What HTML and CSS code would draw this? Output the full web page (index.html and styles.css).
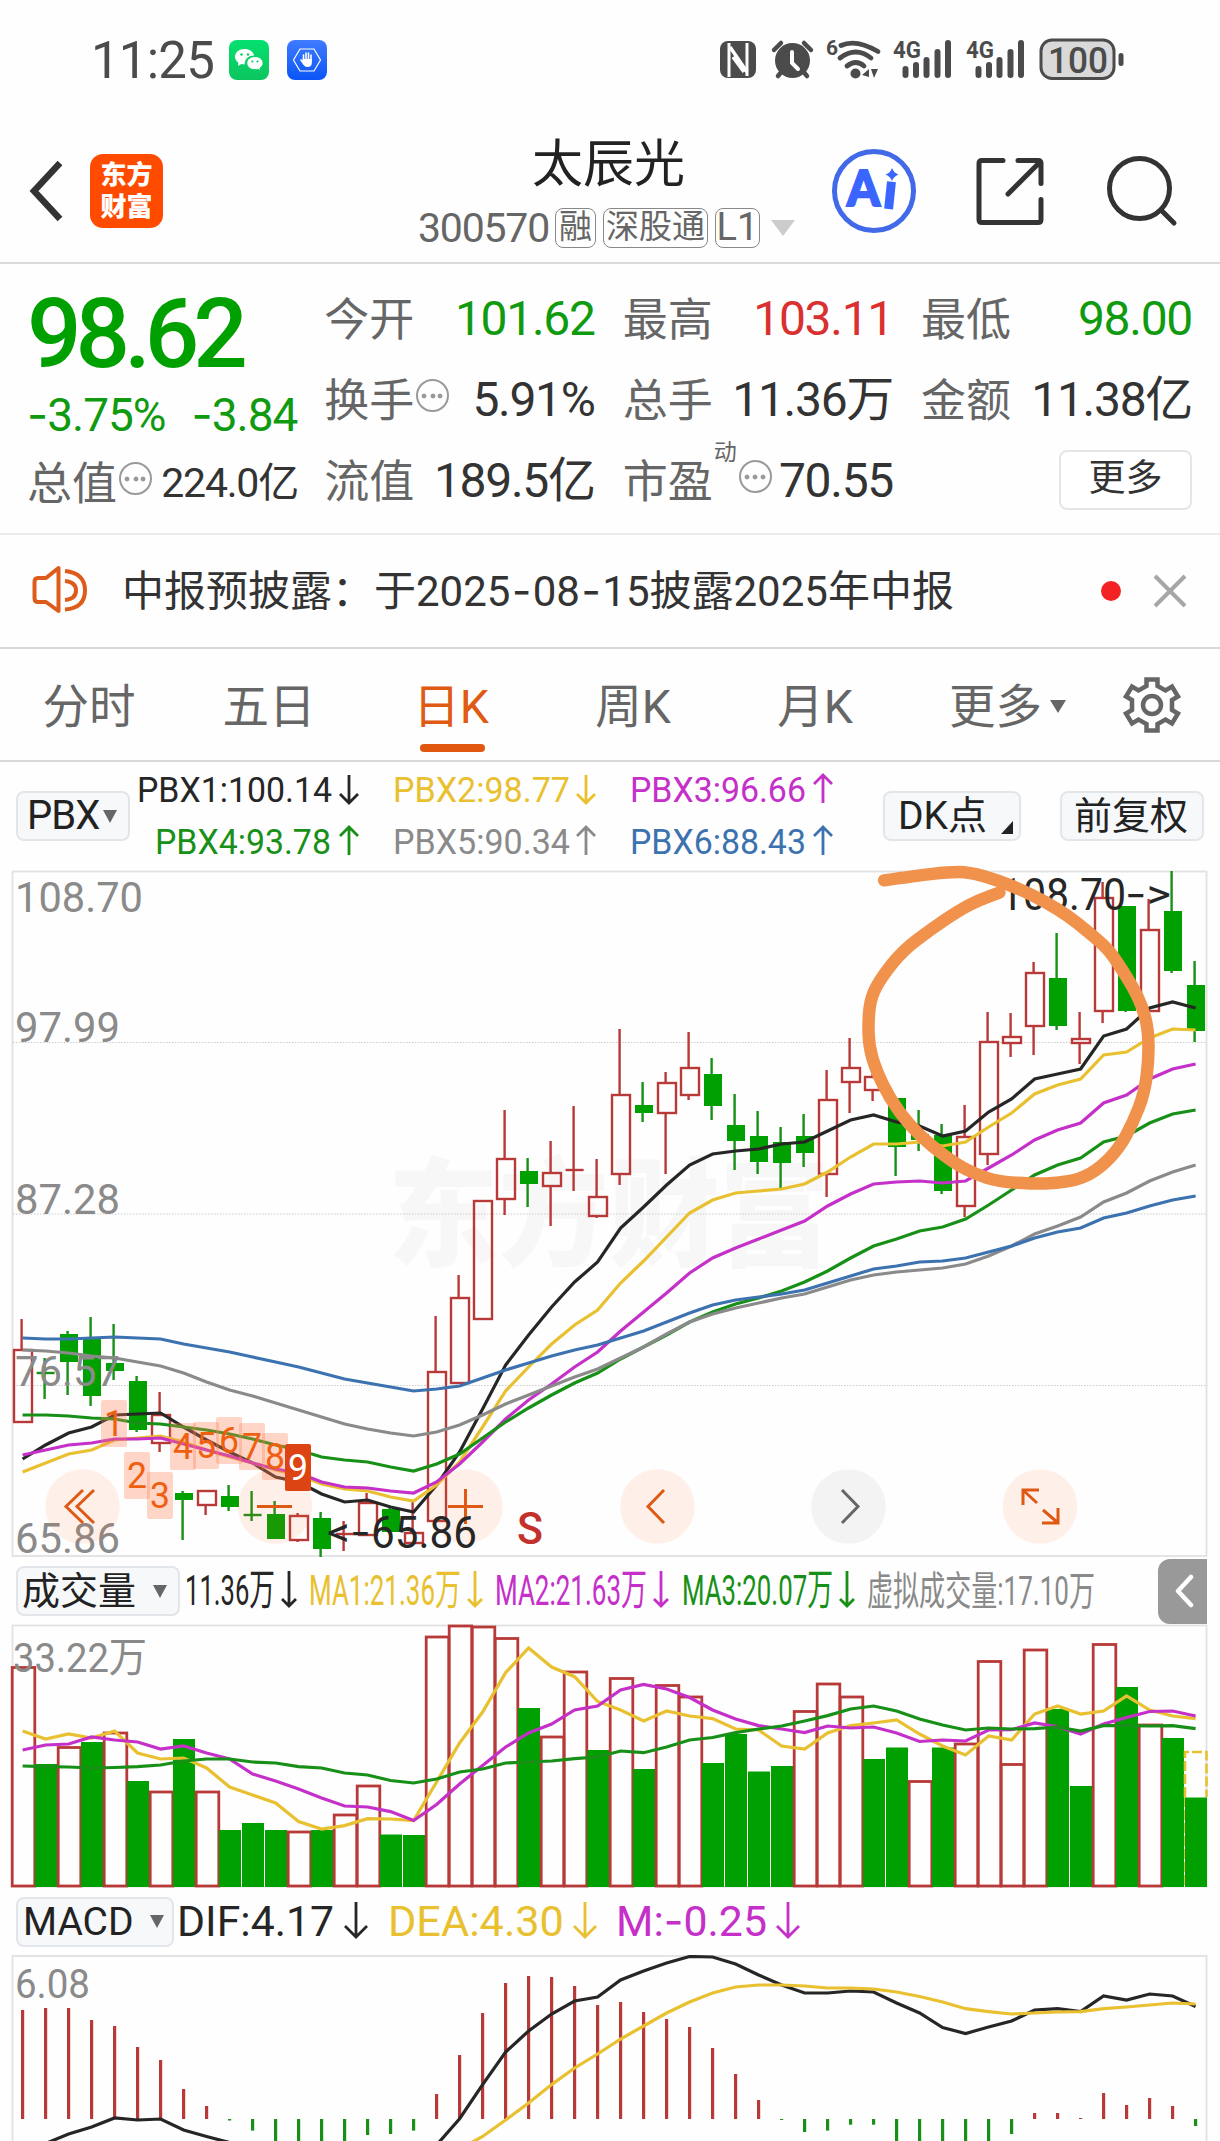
FILE: index.html
```html
<!DOCTYPE html>
<html lang="zh-CN">
<head>
<meta charset="utf-8">
<title>太辰光 300570</title>
<link rel="stylesheet" href="styles.css">
</head>
<body>
<div class="status">
  <span class="clock">11:25</span>
  <svg class="app-ico" width="40" height="40" viewBox="0 0 40 40"><defs><linearGradient id="wg" x2="0" y2="1"><stop stop-color="#05e070"/><stop offset="1" stop-color="#0cc55e"/></linearGradient></defs><rect width="40" height="40" rx="8" fill="url(#wg)"/><path d="M15.500 9C10.200 9 6 12.400 6 16.700c0 2.500 1.300 4.500 3.400 5.900L9 26l3.400-1.900c1 .3 2 .4 3.200.4C15.500 18.500 20 15.500 25 15.500 24.300 11.500 20.300 9 15.500 9Z" fill="#fff"/><path d="M26 16.500c-4.700 0-8.200 3-8.200 6.600s3.500 6.700 8.200 6.700c1 0 2-.2 2.900-.5l2.500 1.500-.5-2.600c2-1.200 3.200-3 3.200-5.100 0-3.700-3.600-6.600-8.100-6.600Z" fill="#fff" stroke="#08d067"/><g fill="#08d067"><circle cx="12.500" cy="14.500" r="1.300"/><circle cx="19" cy="14.500" r="1.300"/><circle cx="23.300" cy="21.500" r="1.100"/><circle cx="28.500" cy="21.500" r="1.100"/></g></svg>
  <svg class="app-ico hand-ico" width="40" height="40" viewBox="0 0 40 40"><defs><linearGradient id="bg" x2="0" y2="1"><stop stop-color="#3f7bff"/><stop offset="1" stop-color="#0b55f5"/></linearGradient></defs><rect width="40" height="40" rx="8" fill="url(#bg)"/><path d="M13 9h14l6.500 11L27 31H13L6.500 20Z" fill="none" stroke="#fff" stroke-width="1.200"/><path d="M16.500 21v-6M19 20v-7M21.500 20v-7M24 21v-6M14 20l3 4" stroke="#fff" stroke-width="1.600" stroke-linecap="round"/><path d="M15.700 19h9.100v4q0 4-4.500 4-3 0-5-4.500Z" fill="#fff"/></svg>
  <svg class="sys" width="412" height="52" viewBox="714 34 412 52">
    <g fill="#4b4b4b" stroke="none">
      <rect x="720" y="41" width="36" height="37" rx="8"/>
      <path d="M729 43v34M747 43v33" stroke="#fefefe" stroke-width="3"/><path d="M730 47l17 25M733 57l11 15" stroke="#fefefe" stroke-width="3.500"/>
      <circle cx="792.500" cy="60.500" r="17.500"/>
      <path d="M774 50l7-7M811 50l-7-7M778 76l5-6M807 76l-5-6" stroke="#4b4b4b" stroke-width="4.500" stroke-linecap="round"/>
      <path d="M792 52v11l6 6" stroke="#fefefe" stroke-width="4" fill="none" stroke-linecap="round"/>
      <text x="826" y="55" font-size="21" font-weight="700">6</text>
      <g fill="none" stroke="#4b4b4b" stroke-width="4.800" stroke-linecap="round"><path d="M841 45.500q15-7 37 6M840 58q16-12 31 0M847 66q9-7 17 0"/></g>
      <circle cx="855.500" cy="73.500" r="5"/><path d="M862 75l7-6v8M871 69l7 0-4 9" />
      <text x="893" y="58" font-size="24" font-weight="700" textLength="28" lengthAdjust="spacingAndGlyphs">4G</text>
      <text x="966" y="58" font-size="24" font-weight="700" textLength="28" lengthAdjust="spacingAndGlyphs">4G</text>
      <path d="M905.500 69v6M916 65v10M926.500 60v15M937.500 52v23M948 43v32" stroke="#4b4b4b" stroke-width="6" stroke-linecap="round"/>
      <path d="M978.500 69v6M989 65v10M999.500 60v15M1010.500 52v23M1021 43v32" stroke="#4b4b4b" stroke-width="6" stroke-linecap="round"/>
      <rect x="1041" y="40" width="73" height="38.500" rx="11" fill="#d9d9d9" stroke="#4b4b4b" stroke-width="3"/>
      <path d="M1121 55.500v8" stroke="#4b4b4b" stroke-width="5" stroke-linecap="round"/>
      <text x="1048" y="73" font-size="37" font-weight="500" textLength="60" lengthAdjust="spacingAndGlyphs">100</text>
    </g>
  </svg>
</div>

<header class="head">
  <svg class="back" width="40" height="66" viewBox="0 0 40 66"><path d="M33 5L7 33l26 28" fill="none" stroke="#333" stroke-width="6.500"/></svg>
  <div class="logo"><span>东方</span><span>财富</span></div>
  <div class="title">
    <h1>太辰光</h1>
    <p><span class="code">300570</span><i class="tag">融</i><i class="tag wide">深股通</i><i class="tag l1">L1</i><b class="drop"></b></p>
  </div>
  <svg class="ai" width="86" height="86" viewBox="832 148 86 86"><circle cx="875" cy="191" r="39.500" fill="#fff" stroke="#4169e8" stroke-width="5"/><text x="848" y="206" class="ai-t" textLength="33" lengthAdjust="spacingAndGlyphs">A</text><text x="884" y="208" class="ai-t" transform="rotate(6 890 200)" textLength="13" lengthAdjust="spacingAndGlyphs">ı</text><path d="M893 168q2 5 6.500 6.500-5 2-6.500 6.500-2-5-6.500-6.500 5-1.500 6.500-6.500Z" fill="#3a66ff"/></svg>
  <svg class="share" width="74" height="74" viewBox="974 154 74 74"><path d="M1004 160.500h-21q-3 0-3 3v56q0 3 3 3h56q3 0 3-3v-20M1019 160.500h20q3 0 3 3v20M1041 162l-32 32" fill="none" stroke="#333" stroke-width="5" stroke-linecap="round"/></svg>
  <svg class="search" width="76" height="76" viewBox="1104 152 76 76"><circle cx="1140.500" cy="187.500" r="30" fill="none" stroke="#333" stroke-width="5"/><path d="M1162 209l13 13" stroke="#333" stroke-width="5" stroke-linecap="round"/></svg>
</header>

<section class="quote">
  <div class="q-left">
    <div class="price">98.62</div>
    <div class="chg"><span><i class="dash">-</i>3.75%</span><span><i class="dash">-</i>3.84</span></div>
    <div class="cell small"><label>总值</label><b class="dots"></b><span>224.0亿</span></div>
  </div>
  <div class="col"><div class="cell"><label>今开</label><span class="dn">101.62</span></div><div class="cell"><label>换手</label><b class="dots"></b><span>5.91%</span></div><div class="cell"><label>流值</label><span>189.5亿</span></div></div>
  <div class="col"><div class="cell"><label>最高</label><span class="up">103.11</span></div><div class="cell"><label>总手</label><span>11.36万</span></div><div class="cell"><label class="pe">市盈<sup>动</sup></label><b class="dots"></b><span>70.55</span></div></div>
  <div class="col"><div class="cell"><label>最低</label><span class="dn">98.00</span></div><div class="cell"><label>金额</label><span>11.38亿</span></div><div class="cell"><button class="more">更多</button></div></div>
</section>

<section class="notice">
  <svg width="60" height="54" viewBox="30 564 60 54" fill="none" stroke="#dd5c1c" stroke-width="4" stroke-linejoin="round"><path d="M58.500 568v43L46 602h-8q-3.500 0-3.500-4V582q0-4 3.500-4h8Z"/><path d="M65 571q20 2 20 19.500T65 609.500M65 581q11 1 11 9.500T65 600"/></svg>
  <p>中报预披露：于2025<i class="dash">-</i>08<i class="dash">-</i>15披露2025年中报</p>
  <b class="red"></b>
  <svg width="36" height="36" viewBox="0 0 36 36"><path d="M3 3l30 30M33 3L3 33" stroke="#a6a6a6" stroke-width="4"/></svg>
</section>

<nav class="tabs">
  <a>分时</a><a>五日</a><a class="on">日K</a><a>周K</a><a>月K</a><a class="mr">更多<b></b></a>
  <svg width="60" height="60" viewBox="-30 -30 60 60" fill="none" stroke="#666" stroke-width="4.500"><path d="M-5.500-25.500h11v6.500l8 4.500 6.500-4 6 10-6 3.500v10l6 3.500-6 10-6.500-4-8 4.500v6.500h-11v-6.500l-8-4.500-6.500 4-6-10 6-3.500V-5l-6-3.500 6-10 6.500 4 8-4.500Z"/><circle r="9"/></svg>
</nav>

<div class="legend pbx">
  <button class="sel">PBX<b></b></button>
  <svg width="720" height="108" viewBox="132 762 720 108" class="lg" id="pbxLegend"></svg>
  <button class="sel dk">DK点<b></b></button>
  <button class="sel fq">前复权</button>
</div>

<svg class="chart" id="kline" width="1220" height="688" viewBox="0 870 1220 688"></svg>

<div class="legend vol">
  <button class="sel">成交量<b></b></button>
  <svg width="960" height="66" viewBox="181 1558 960 66" class="lg" id="volLegend"></svg>
  <div class="fold"><svg width="20" height="34" viewBox="0 0 20 34"><path d="M17 3L4 17l13 14" fill="none" stroke="#fff" stroke-width="4.500" stroke-linecap="round" stroke-linejoin="round"/></svg></div>
</div>
<svg class="chart" id="volume" width="1220" height="264" viewBox="0 1624 1220 264"></svg>
<div class="legend macd">
  <button class="sel">MACD<b></b></button>
  <svg width="660" height="67" viewBox="175 1888 660 67" class="lg" id="macdLegend"></svg>
</div>
<svg class="chart" id="macd" width="1220" height="186" viewBox="0 1955 1220 186"></svg>
<script src="chart.js"></script>
</body>
</html>
```
FILE: styles.css
```css
* { box-sizing: border-box; }
body { margin: 0; width: 1220px; height: 2141px; overflow: hidden; background: #fefefe; color: #333; font-family: Roboto, "Noto Sans CJK SC", sans-serif; }
i { font-style: normal; }
svg { display: block; flex: none; }
button { font: inherit; color: inherit; margin: 0; padding: 0; }
h1, p { margin: 0; font-weight: 400; }
.dash { font-family: Inter, sans-serif; }

.status { height: 120px; display: flex; align-items: center; padding-left: 91px; color: #4b4b4b; }
.clock { font-size: 51px; width: 138px; letter-spacing: -.8px; }
.hand-ico { margin-left: 18px; }
.sys { margin-left: auto; margin-right: 94px; }

.head { height: 144px; border-bottom: 2px solid #dadada; display: flex; align-items: center; padding: 0 40px 0 27px; }
.logo { margin-left: 23px; width: 73px; height: 74px; border-radius: 13px; background: #ff4b00; color: #fff; font-weight: 900; font-size: 26px; line-height: 32px; display: flex; flex-direction: column; align-items: center; justify-content: center; }
.title { width: 400px; margin-left: 246px; height: 142px; padding-top: 10px; }
.title h1 { font-size: 51px; line-height: 70px; color: #222; padding-left: 123px; }
.title p { display: flex; align-items: center; height: 44px; margin-top: 6px; padding-left: 9px; color: #666; }
.code { font-size: 41px; letter-spacing: -1.200px; width: 137px; }
.tag { border: 1.500px solid #888; border-radius: 8px; height: 40px; width: 41px; margin-right: 7px; font-size: 33px; line-height: 36px; text-align: center; white-space: nowrap; }
.tag.wide { width: 105px; }
.tag.l1 { width: 45px; font-size: 38px; }
.drop { margin-left: 4px; border: 12px solid transparent; border-top: 16px solid #ccc; border-bottom: 0; }
.ai { margin-left: 22px; }
.ai-t { font-family: Lato, sans-serif; font-weight: 900; font-size: 49px; fill: #3a66ff; stroke: #3a66ff; stroke-width: 2px; }
.share { margin-left: 56px; }
.search { margin-left: 56px; }

.quote { height: 271px; border-bottom: 2px solid #ececec; display: flex; padding: 13px 0 0 27px; }
.q-left { width: 298px; }
.price { height: 110px; line-height: 112px; font-size: 96px; font-weight: 500; letter-spacing: -6px; color: #00a000; padding-top: 1px; }
.chg { height: 50px; line-height: 54px; margin-top: 0; font-size: 46px; letter-spacing: -1px; color: #109a10; display: flex; gap: 26px; }
.q-left .cell { width: 271px; margin-top: 4px; }
.col { width: 271px; margin-right: 28px; }
.cell { height: 81px; display: flex; align-items: center; white-space: nowrap; }
.cell label { font-size: 45px; line-height: 60px; color: #666; position: relative; top: 3px; }
.cell span { margin-left: auto; font-size: 48px; line-height: 60px; padding-top: 2px; letter-spacing: -1.300px; }
.cell.small span { font-size: 41px; letter-spacing: -1.200px; }
.cell .dn { color: #109a10; }
.cell .up { color: #d93030; }
.cell sup { position: absolute; left: 91px; top: -15px; font-size: 23px; line-height: 30px; }
.dots { width: 33px; height: 33px; border-radius: 50%; border: 2.500px solid #999; margin: -6px 0 0 2px; background: radial-gradient(circle, #999 2px, transparent 2.800px) center / 8px 8px no-repeat, radial-gradient(circle, #999 2px, transparent 2.800px) 2px center / 8px 8px no-repeat, radial-gradient(circle, #999 2px, transparent 2.800px) 18px center / 8px 8px no-repeat; }
.pe + .dots { margin-left: 26px; }
.more { margin-left: 138px; width: 134px; height: 60px; border: 2px solid #e6e6e6; border-radius: 8px; background: #fff; font-size: 37px; line-height: 50px; padding-bottom: 2px; }

.notice { height: 114px; border-bottom: 2px solid #d8d8d8; display: flex; align-items: center; padding-left: 30px; }
.notice p { margin-left: 32px; width: 979px; font-size: 42px; line-height: 60px; white-space: pre; }
.notice .dash { margin: 0 1.500px; }
.red { width: 20px; height: 20px; border-radius: 50%; background: #f32323; margin-right: 31px; }

.tabs { height: 113px; border-bottom: 2px solid #d8d8d8; display: flex; align-items: center; color: #666; font-size: 46.500px; }
.tabs a { width: 182px; text-align: center; height: 111px; line-height: 116px; position: relative; white-space: nowrap; }
.tabs a:first-child { width: 178px; }
.tabs .on { color: #df5a12; }
.tabs .on::after { content: ""; position: absolute; left: 60px; bottom: 8px; width: 65px; height: 8px; border-radius: 4px; background: #e2570f; }
.tabs .mr { width: 216px; padding-left: 43px; text-align: left; }
.mr b { display: inline-block; margin-left: 8px; vertical-align: 10px; border: 8px solid transparent; border-top: 13px solid #666; border-bottom: 0; }

.legend { display: flex; align-items: center; color: #222; position: relative; }
.legend svg text { font-family: Roboto, "Noto Sans CJK SC", sans-serif; }
.sel { border: 2px solid #e2e5e9; border-radius: 8px; background: #f6f8fa; white-space: nowrap; line-height: 44px; display: flex; align-items: center; flex: none; }
.sel b { border: 7.500px solid transparent; border-top: 13px solid #666; border-bottom: 0; }
.pbx { height: 108px; }
.pbx .sel { margin-left: 16px; width: 114px; height: 50px; font-size: 40px; padding-left: 9px; letter-spacing: -1px; }
.pbx .sel b { margin-left: 4px; }
.pbx .lg { margin-left: 1px; }
.pbx .dk { margin-left: 32px; width: 138px; font-size: 39px; padding-left: 13px; position: relative; letter-spacing: 0; }
.pbx .dk b { position: absolute; right: 6px; bottom: 5px; border: 0; border-left: 12px solid transparent; border-bottom: 13px solid #222; }
.pbx .fq { margin-left: 39px; width: 144px; font-size: 38px; padding-left: 12px; letter-spacing: 0; }
.vol { height: 66px; }
.vol .sel { margin-left: 16px; width: 164px; height: 50px; font-size: 38px; padding-left: 4px; }
.vol .sel b { margin-left: 17px; }
.vol .lg { margin-left: 1px; }
.fold { width: 49px; height: 65px; margin-left: 17px; background: #999; border-radius: 12px 0 0 12px; display: flex; align-items: center; padding-left: 16px; }
.macd { height: 67px; }
.macd .sel { margin-left: 16px; width: 158px; height: 50px; font-size: 39px; padding-left: 5px; }
.macd .sel b { margin-left: 16px; }
.macd .lg { margin-left: 1px; }
.chart { overflow: visible; }
#volume, #macd { overflow: hidden; }
.chart text { font-family: Roboto, "Noto Sans CJK SC", sans-serif; }
svg .dash { font-family: Inter, sans-serif; }
```
FILE: chart.js
```js
const RED = '#b83a38', GREEN = '#00a000', INK = '#262626', YEL = '#e8c030', MAG = '#c430c8', DG = '#189018', GR = '#8a8a8a', BLUE = '#3c72b0';
const cx = i => 22.6 + 23 * i;
const el = id => document.getElementById(id);
const T = (s, x, y, w, size, fill, extra = '') => `<text data-x="${x}" data-y="${y}" data-w="${w}" font-size="${size}" fill="${fill}" ${extra}>${String(s).replace('-', '<tspan class="dash">-</tspan>')}</text>`;
const line = (ys, c, start = 0) => `<polyline fill="none" stroke="${c}" stroke-width="3.200" points="${ys.map((y, k) => `${cx(start + k)},${y}`).join(' ')}"/>`;
const arrow = (x, y1, y2, c, up, h = 9) => { const t = up ? y1 : y2, d = up ? h : -h; return `<path d="M${x} ${y1}V${y2}M${x - h} ${t + d}L${x} ${t}L${x + h} ${t + d}" fill="none" stroke="${c}" stroke-width="2.800"/>`; };

el('pbxLegend').innerHTML = [
  ['PBX1:100.14', 138, 195, 802, INK, 0, 350], ['PBX2:98.77', 394, 177, 802, YEL, 0, 587], ['PBX3:96.66', 631, 176, 802, MAG, 1, 824],
  ['PBX4:93.78', 156, 176, 854, DG, 1, 350], ['PBX5:90.34', 394, 177, 854, GR, 1, 587], ['PBX6:88.43', 631, 176, 854, BLUE, 1, 824]
].map(([s, x, w, y, c, up, ax]) => T(s, x, y, w, 35, c) + arrow(ax, y - 27, y + 1, c, up)).join('');
el('volLegend').innerHTML = [
  ['11.36万', 185, 90, INK, 289], ['MA1:21.36万', 309, 152, YEL, 475], ['MA2:21.63万', 495, 152, MAG, 661], ['MA3:20.07万', 682, 151, DG, 847]
].map(([s, x, w, c, ax]) => T(s, x, 1605, w, 43, c) + arrow(ax, 1571, 1606, c, 0, 7)).join('') + T('虚拟成交量:17.10万', 867, 1605, 228, 40, GR);
el('macdLegend').innerHTML = [
  ['DIF:4.17', 177, 157, INK, 356], ['DEA:4.30', 388, 176, YEL, 585], ['M:-0.25', 616, 151, MAG, 788]
].map(([s, x, w, c, ax]) => T(s, x, 1936, w, 43, c) + arrow(ax, 1902, 1937, c, 0, 11)).join('');

// colour, high, body top, body bottom, low
const candles = `r1319,1350,1422,1422 g1358,1373,1373,1399 g1331,1334,1362,1395 g1317,1337,1396,1406 g1324,1363,1371,1380 g1376,1381,1430,1432 r1392,1415,1443,1452 g1491,1493,1500,1540 r1491,1491,1505,1515 g1485,1496,1507,1511 g1491,1515,1515,1521 g1501,1514,1539,1539 r1513,1516,1540,1542 g1512,1518,1549,1557 r1521,1534,1534,1551 r1493,1503,1535,1535 g1507,1509,1532,1532 r1500,1533,1543,1543 r1316,1372,1521,1521 r1275,1298,1383,1383 r1200,1201,1319,1319 r1110,1159,1199,1215 g1158,1171,1184,1207 r1141,1173,1186,1226 r1106,1170,1170,1191 r1159,1197,1216,1218 r1029,1095,1174,1185 g1082,1105,1113,1122 r1072,1083,1113,1174 r1032,1068,1095,1100 g1058,1074,1106,1120 g1094,1125,1141,1170 g1111,1136,1162,1174 g1127,1142,1163,1188 g1114,1136,1153,1167 r1070,1100,1174,1197 r1038,1068,1082,1113 r1073,1077,1090,1101 g1098,1098,1147,1176 g1110,1134,1140,1151 g1124,1135,1191,1194 r1105,1137,1206,1217 r1012,1042,1154,1165 r1013,1037,1043,1057 r962,973,1026,1055 g933,978,1026,1030 r1012,1039,1043,1064 r882,898,1011,1023 g906,906,1011,1012 r899,930,1011,1011 g871,911,971,973 g961,985,1031,1042`.split(' ');
const candle = (s, i) => {
  const [h, t, b, l] = s.slice(1).split(',').map(Number), c = s[0] === 'r' ? RED : DG, x = cx(i);
  let o = `<path d="M${x - 1} ${h}V${t}M${x - 1} ${b}V${l}" stroke="${c}" stroke-width="2.400"/>`;
  if (t === b) return o + `<path d="M${x - 9} ${t}H${x + 9}" stroke="${c}" stroke-width="2.400"/>`;
  return o + (s[0] === 'r' ? `<rect x="${x - 8.6}" y="${t}" width="18" height="${b - t}" fill="none" stroke="${RED}" stroke-width="2.400"/>` : `<rect x="${x - 8.6}" y="${t}" width="18" height="${b - t}" fill="${GREEN}"/>`);
};
const ma = [
  [INK, [1459,1445,1433,1427,1415,1414,1413,1427,1440,1452,1463,1477,1482,1494,1502,1500,1507,1512,1485,1452,1409,1365,1335,1307,1282,1262,1228,1207,1185,1165,1154,1151,1149,1144,1142,1131,1120,1115,1122,1126,1136,1131,1112,1099,1079,1074,1069,1036,1029,1008,1002,1008]],
  [YEL, [1472,1463,1454,1450,1440,1438,1436,1442,1450,1457,1463,1470,1475,1484,1489,1491,1497,1501,1485,1462,1427,1391,1367,1344,1325,1310,1283,1261,1237,1213,1200,1193,1191,1189,1184,1172,1157,1144,1144,1142,1146,1142,1127,1113,1094,1085,1079,1055,1052,1038,1029,1030]],
  [MAG, [1455,1450,1445,1443,1439,1439,1438,1444,1450,1456,1463,1469,1473,1482,1487,1488,1491,1493,1482,1464,1442,1419,1400,1384,1367,1352,1331,1312,1293,1273,1258,1248,1239,1230,1221,1206,1194,1184,1182,1181,1183,1181,1168,1155,1140,1130,1123,1103,1095,1079,1069,1064]],
  [DG, [1415,1415,1416,1418,1419,1423,1424,1427,1430,1434,1439,1445,1450,1457,1460,1462,1467,1471,1464,1454,1438,1422,1408,1395,1383,1373,1359,1347,1335,1322,1312,1304,1298,1291,1282,1271,1258,1246,1239,1231,1227,1219,1205,1190,1175,1165,1158,1142,1136,1123,1114,1110]],
  [GR, [1350,1351,1353,1356,1358,1362,1366,1373,1382,1390,1396,1403,1410,1417,1424,1429,1433,1436,1432,1425,1415,1404,1395,1386,1377,1369,1358,1347,1334,1322,1314,1308,1303,1298,1294,1287,1280,1275,1272,1270,1268,1264,1256,1246,1234,1226,1217,1202,1193,1181,1172,1165]],
  [BLUE, [1338,1339,1339,1338,1337,1338,1339,1344,1348,1352,1357,1362,1367,1373,1379,1383,1387,1391,1389,1386,1378,1370,1363,1356,1350,1345,1338,1331,1322,1313,1305,1300,1297,1294,1290,1283,1276,1269,1266,1262,1261,1258,1252,1246,1238,1232,1228,1218,1213,1206,1200,1196]]
];
const marks = [[101,1400],[124,1452],[147,1472],[170,1423],[193,1422],[216,1417],[239,1423],[262,1433],[285,1444]];
const axis = [['108.70', 912, 128], ['97.99', 1042, 105], ['87.28', 1214, 105], ['76.57', 1386, 105], ['65.86', 1553, 105]];
const tools = [[82.5, 'M83 1490L66 1506.500 83 1523M94 1490L77 1506.500 94 1523'], [275, 'M257 1506.500H292'], [465.5, 'M448 1506.500H483M465.500 1489V1524'], [657.5, 'M664 1490L648 1506.500 664 1523'], [848.5, 'M842 1490L858 1506.500 842 1523'], [1040, 'M1023 1505V1490H1039M1024 1491L1037 1503M1043 1510L1057 1522M1058 1508V1523H1042']];
const pen = [[706,61],[790,47],[870,36],[925,36],[1000,62],[1060,90],[1120,125],[1180,168],[1230,215],[1280,265],[1310,315],[1345,380],[1370,440],[1385,510],[1386,600],[1375,700],[1345,790],[1310,865],[1260,925],[1210,957],[1150,970],[1090,971],[1000,965],[940,942],[890,912],[830,860],[770,795],[720,715],[685,630],[667,560],[665,480],[672,410],[700,350],[755,270],[830,205],[900,150],[950,120],[1002,98]].map(([x, y]) => [609.5 + x / 2.5705, 860 + y / 3]);
let penD = `M${pen[0]}`;
for (let k = 1; k < pen.length - 1; k++) penD += `Q${pen[k]} ${(pen[k][0] + pen[k + 1][0]) / 2},${(pen[k][1] + pen[k + 1][1]) / 2}`;
penD += `L${pen[pen.length - 1]}`;
const frame = (y, h) => `<rect x="12.500" y="${y}" width="1194" height="${h}" fill="none" stroke="#e2e2e2" stroke-width="1.800"/>`;

el('kline').innerHTML = T('东方财富', 388, 1257, 442, 118, '#f7f7f7', 'font-weight="900"') + frame(871.5, 684.5)
  + [1042.5, 1214, 1385.5].map(y => `<path d="M13 ${y}H1207" stroke="#ccc" stroke-width="1.200" stroke-dasharray="1.500 1.500"/>`).join('')
  + candles.map(candle).join('') + ma.map(([c, y]) => line(y, c)).join('')
  + axis.map(([s, y, w]) => T(s, 15, y, w, 43, GR)).join('')
  + T('108.70', 1000, 910, 126, 44, INK) + T('->', 1125, 908, 46, 40, INK)
  + tools.map(([x, d], k) => `<circle cx="${x}" cy="1506.500" r="37.300" fill="${k === 4 ? '#f3f3f3' : 'rgba(255,100,20,.09)'}"/><path d="${d}" fill="none" stroke="${k === 4 ? '#666' : '#de5a14'}" stroke-width="3"/>`).join('')
  + marks.map(([x, y], k) => `<rect x="${x}" y="${y}" width="26" height="47" rx="2" fill="${k === 8 ? '#dd4414' : 'rgba(255,130,85,.33)'}"/>` + T(k + 1, x + 3, y + 36, 20, 37, k === 8 ? '#fff' : '#ee6010')).join('')
  + T('65.86', 371, 1548, 106, 44, INK) + T('&lt;-', 327, 1546, 44, 40, INK)
  + T('S', 517, 1544, 26, 44, '#c4302c', 'font-weight="500"')
  + `<path d="${penD}" fill="none" stroke="#f0924c" stroke-width="12.500" stroke-linecap="round" stroke-linejoin="round"/>`;

const vols = 'r1667.5 g1764 r1747.5 g1742 r1733 g1781 r1792 g1739 r1792 g1830 g1823 g1830 r1832 g1830 r1815 r1786 g1834.5 g1835 r1637 r1626 r1627 r1638.5 g1708 r1737 r1672 g1750 r1678.5 g1769 r1685.5 r1697 g1763 g1734 g1771.5 g1766 r1711.5 r1684 r1697 g1759 g1747.5 r1781.5 g1747.5 r1744 r1661.5 r1764.5 r1650 g1709 g1786 r1644.5 g1687 r1725 g1738 g1797.5'.split(' ');
el('volume').innerHTML = frame(1625.5, 261)
  + vols.map((s, i) => { const y = +s.slice(1), x = cx(i); return s[0] === 'g' ? `<rect x="${x - 10.6}" y="${y}" width="22" height="${1887 - y}" fill="${GREEN}"/>` : `<rect x="${x - 10.4}" y="${y}" width="22.600" height="${1886 - y}" fill="none" stroke="${RED}" stroke-width="2.800"/>`; }).join('')
  + `<path d="M1185 1797V1752H1206.500V1797" fill="none" stroke="${YEL}" stroke-width="2.600" stroke-dasharray="10 3"/><path d="M1184.500 1797V1886" stroke="${YEL}" stroke-dasharray="10 3"/>`
  + line([1731,1739,1734,1738,1731,1753,1759,1758,1768,1787,1795,1803,1821.5,1829,1825.6,1818.6,1819,1820.5,1782,1743,1712,1672.6,1648,1667,1676.7,1701.5,1710,1721,1711,1716,1718.6,1729,1730,1746,1749,1733,1725.6,1723,1720,1734,1746,1755,1736,1740,1714,1706,1714,1711,1696,1710,1716,1718.6], YEL)
  + line([1750,1745,1744,1737,1740,1742,1749,1746,1753,1759,1774,1781,1789,1798,1806,1807,1811.6,1820.5,1804.5,1784,1765.6,1747,1733,1724,1710,1706,1690,1684.5,1689,1697.5,1710,1719,1725.6,1729,1732.6,1726,1728,1727,1733,1741.5,1740,1741,1730,1729.7,1723,1726.7,1734,1724,1717.5,1711.5,1711,1716], MAG)
  + line([1766,1766.7,1767,1768,1767.5,1766.7,1765,1761,1759,1759,1762,1763,1766.7,1768,1773,1775,1780.5,1783,1779,1772,1769,1763,1762,1761,1758.6,1757,1751,1752.7,1747,1740,1737.5,1732.6,1729,1726,1721,1715.6,1709,1706,1711,1719,1725,1730,1728,1729,1728.6,1727,1731,1725.6,1725.6,1726,1725.6,1728.6], DG)
  + T('33.22万', 13, 1672, 134, 41, GR);

const hist = [2010,2008,2008,2020,2026,2047,2060,2089,2106,2120.5,2130.6,2145,2150,2150,2145,2135,2134,2130.6,2094,2055,2013,1983,1976,1977,1986,2005,2002,2012,2019,2027,2048,2074,2100,2120,2132,2130.6,2124.7,2124.7,2145,2150,2150,2150,2145,2134,2113,2113,2118,2093,2105,2098,2106,2126];
el('macd').innerHTML = frame(1956, 400)
  + hist.map((y, i) => `<path d="M${cx(i)} 2119V${y}" stroke="${y < 2119 ? RED : DG}" stroke-width="3.200"/>`).join('')
  + line([2150,2143.5,2134,2127,2118,2120,2119,2130,2136.5,2142.5,2150,2160,2170,2175,2175,2172,2170,2170,2145,2118.7,2084.6,2052,2031,2014,2001,1997,1980,1971,1963,1956.5,1957,1964,1975,1985,1993,1993,1991,1992,2003,2013,2027.6,2033.5,2027,2021,2010,2008.7,2011.6,1996,2000,1994,1996,2006.5], INK)
  + line([2149,2136.5,2120,2103,2084.6,2068,2054,2039,2026,2013,2002,1993,1987,1985,1985,1986,1988,1988,1989,1992,1996.5,2002,2008.7,2011.6,2014,2013,2012,2011.6,2008.7,2007,2005,2003,2004], YEL, 19)
  + T('6.08', 15, 1998, 75, 41, GR);

// squeeze every label to its column width
document.querySelectorAll('text[data-w]').forEach(t => {
  const { x, y, w } = t.dataset;
  t.setAttribute('transform', `translate(${x} ${y}) scale(${w / t.getComputedTextLength()} 1)`);
});
```
